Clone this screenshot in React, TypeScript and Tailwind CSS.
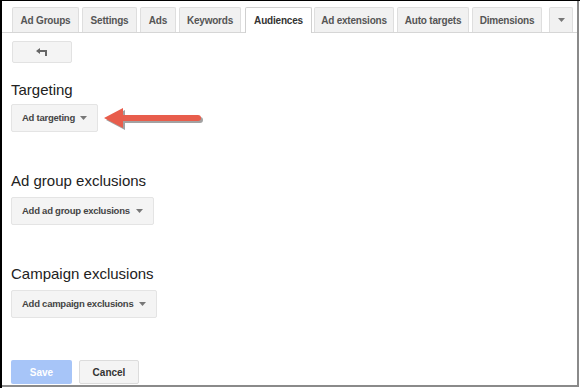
import React from "react";

const tabs = [
  { label: "Ad Groups", w: "w-[67px]", ml: "ml-0" },
  { label: "Settings", w: "w-[55px]", ml: "ml-[3px]" },
  { label: "Ads", w: "w-[36px]", ml: "ml-[3px]" },
  { label: "Keywords", w: "w-[62px]", ml: "ml-[3px]" },
  { label: "Audiences", w: "w-[67px]", ml: "ml-[4px]", active: true },
  { label: "Ad extensions", w: "w-[80px]", ml: "ml-[2px]" },
  { label: "Auto targets", w: "w-[72px]", ml: "ml-[3px]" },
  { label: "Dimensions", w: "w-[70px]", ml: "ml-[3px]" },
];

const Caret = ({ className = "" }: { className?: string }) => (
  <svg width="7" height="4" viewBox="0 0 7 4" className={className}>
    <path d="M0 0h7L3.5 4z" fill="#777" />
  </svg>
);

const MenuButton = ({ label, w }: { label: string; w: string }) => (
  <button
    className={`${w} h-[28px] flex items-center justify-between pl-[10px] pr-[10px] bg-[#f4f4f4] border border-[#e4e4e4] rounded-[2px] text-[9.5px] tracking-[-0.25px] font-bold text-[#444] whitespace-nowrap`}
  >
    <span>{label}</span>
    <Caret className="shrink-0" />
  </button>
);

export default function App() {
  return (
    <div className="w-[580px] h-[388px] bg-white overflow-hidden font-['Liberation_Sans',Arial,sans-serif]">
      <div className="w-full h-full border-l-2 border-t border-black">
        <div className="w-[577px] h-[386px] border-r-2 border-b-2 border-[#8a8a8a] flex flex-col">
          {/* Tabs */}
          <div className="flex items-end pt-[6px] pl-[10px] border-b border-[#d6d6d6] h-[32px]">
            {tabs.map((t) => (
              <div
                key={t.label}
                className={`${t.w} ${t.ml} h-[25px] flex items-center justify-center text-[10px] tracking-[-0.2px] font-bold whitespace-nowrap rounded-t-[2px] border border-b-0 ${
                  t.active
                    ? "bg-white border-[#d0d0d0] text-[#333] h-[26px] -mb-px"
                    : "bg-[#f1f1f1] border-[#dedede] text-[#555]"
                }`}
              >
                {t.label}
              </div>
            ))}
            <div className="w-[24px] ml-[7px] h-[25px] flex items-center justify-center bg-[#f1f1f1] border border-b-0 border-[#dedede] rounded-t-[2px]">
              <Caret />
            </div>
          </div>

          <div className="flex flex-col items-start pl-[9px]">
            {/* Back */}
            <button className="mt-[8px] ml-px w-[60px] h-[22px] flex items-center justify-center bg-[#f4f4f4] border border-[#e2e2e2] rounded-[2px]">
              <svg width="12" height="8" viewBox="0 0 12 8">
                <path d="M0 3L4 0v2h7v6H9V4H4v2z" fill="#666" />
              </svg>
            </button>

            <h2 className="mt-[18px] text-[15px] leading-[18px] text-[#222]">Targeting</h2>
            <div className="mt-[5px] flex items-center">
              <MenuButton label="Ad targeting" w="w-[87px]" />
              <svg width="100" height="26" viewBox="0 0 100 26" className="ml-[6px]">
                <g transform="translate(2,2)" fill="#555" opacity="0.55">
                  <path d="M0 13L19 3v7h75a3 3 0 0 1 0 6H19v7z" />
                </g>
                <path d="M0 13L19 3v7h75a3 3 0 0 1 0 6H19v7z" fill="#e85d4c" />
              </svg>
            </div>

            <h2 className="mt-[40px] text-[15px] leading-[18px] text-[#222]">Ad group exclusions</h2>
            <div className="mt-[7px]">
              <MenuButton label="Add ad group exclusions" w="w-[143px]" />
            </div>

            <h2 className="mt-[40px] text-[15px] leading-[18px] text-[#222]">Campaign exclusions</h2>
            <div className="mt-[7px]">
              <MenuButton label="Add campaign exclusions" w="w-[146px]" />
            </div>

            <div className="mt-[42px] flex gap-[7px]">
              <button className="w-[61px] h-[24px] bg-[#a7c5f8] rounded-[2px] text-[10px] font-bold text-white">
                Save
              </button>
              <button className="w-[60px] h-[24px] bg-[#f4f4f4] border border-[#dcdcdc] rounded-[2px] text-[10px] font-bold text-[#333]">
                Cancel
              </button>
            </div>
          </div>
        </div>
      </div>
    </div>
  );
}
